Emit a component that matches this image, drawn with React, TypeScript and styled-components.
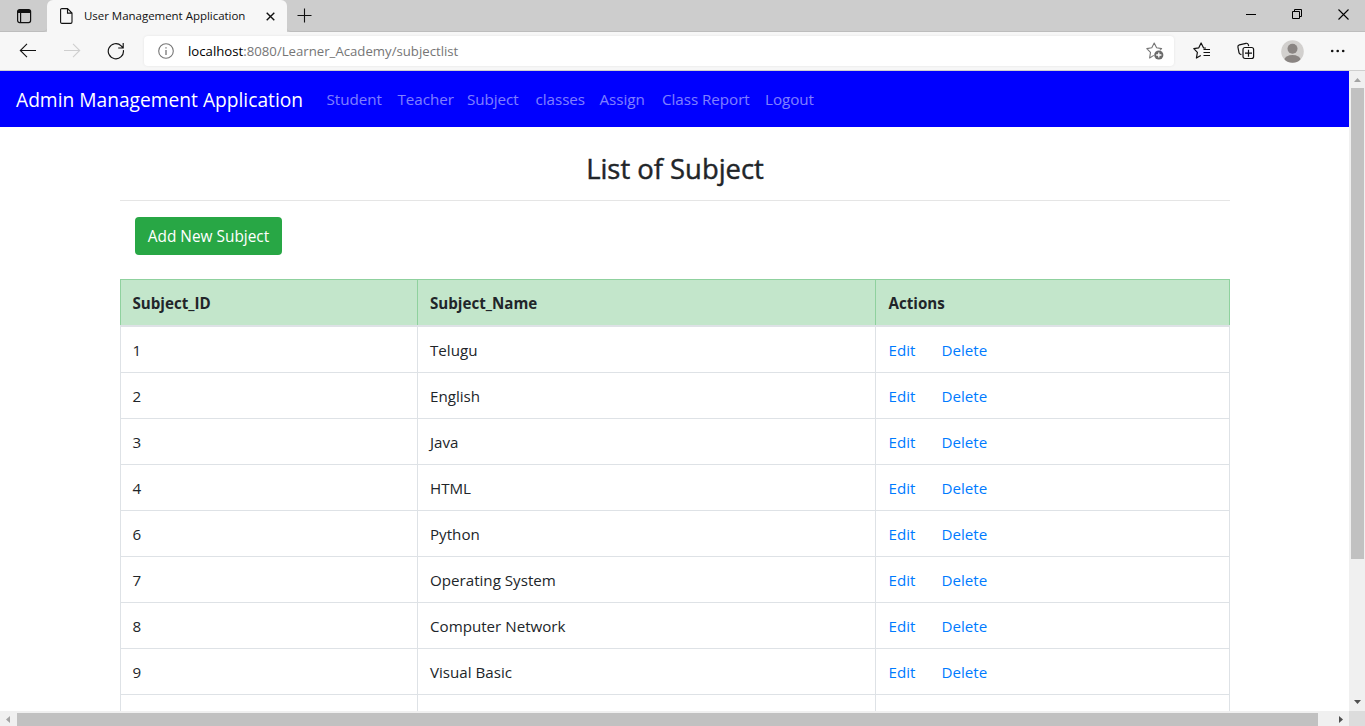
import React from "react";
import styled, { createGlobalStyle } from "styled-components";

const GlobalStyle = createGlobalStyle`
  *, *::before, *::after { box-sizing: border-box; }
  html, body { margin: 0; padding: 0; overflow: hidden; background: #fff; }
  body { font-family: "Open Sans", "Noto Sans", sans-serif; color: #212529; }
  svg { display: block; }
`;

const Browser = styled.div`
  display: flex;
  flex-direction: column;
  width: 1365px;
  height: 726px;
  overflow: hidden;
`;

const TabStrip = styled.div`
  display: flex;
  height: 32px;
  background: #cdcdcd;
  flex: none;
`;

const TabActions = styled.div`
  display: flex;
  align-items: center;
  width: 47px;
  padding-left: 16px;
  border-bottom: 1px solid #bdbdbd;
  border-bottom-right-radius: 4px;
`;

const Tab = styled.div`
  display: flex;
  align-items: center;
  width: 240px;
  padding-left: 13px;
  background: #f7f7f7;
  border-radius: 6px 6px 0 0;
`;

const TabTitle = styled.span`
  width: 182px;
  margin-left: 11px;
  font-size: 11.5px;
  line-height: 16px;
  letter-spacing: -0.03px;
  color: #111;
  white-space: nowrap;
`;

const StripRest = styled.div`
  display: flex;
  flex: 1;
  align-items: center;
  justify-content: space-between;
  padding: 0 16px 0 10px;
  border-bottom: 1px solid #bdbdbd;
  border-bottom-left-radius: 4px;
`;

const WindowButtons = styled.div`
  display: flex;
  align-items: center;
  gap: 35px;
  padding-bottom: 2px;
`;

const Toolbar = styled.div`
  display: flex;
  align-items: center;
  height: 39px;
  flex: none;
  background: #f7f7f7;
  border-bottom: 1px solid #cfcfcf;
`;

const NavButtons = styled.div`
  display: flex;
  align-items: center;
  gap: 26px;
  width: 144px;
  padding-left: 19px;
`;

const AddressBar = styled.div`
  display: flex;
  align-items: center;
  width: 1030px;
  height: 30px;
  padding: 0 10px 0 14px;
  background: #fff;
  border-radius: 4px;
  box-shadow: 0 0 3px rgba(0, 0, 0, 0.08);
`;

const Url = styled.span`
  flex: 1;
  margin-left: 14px;
  font-size: 13.2px;
  line-height: 18px;
  letter-spacing: 0;
  color: #767676;
  white-space: nowrap;
`;

const Host = styled.span`
  color: #000;
`;

const ToolbarActions = styled.div`
  display: flex;
  align-items: center;
  gap: 26px;
  padding-left: 19px;
`;

const Viewport = styled.div`
  display: flex;
  flex: 1;
  min-height: 0;
`;

const Page = styled.main`
  width: 1349px;
  height: 640px;
  overflow: hidden;
  background: #fff;
`;

const Navbar = styled.nav`
  display: flex;
  align-items: center;
  height: 56px;
  padding: 0 16px 0;
  background: #0000ff;
`;

const Brand = styled.a`
  width: 302.5px;
  font-size: 19.2px;
  line-height: 30px;
  padding-top: 2px;
  color: #fff;
  white-space: nowrap;
`;

const NavLink = styled.a<{ $width: number }>`
  width: ${(p) => p.$width}px;
  margin-left: 8px;
  margin-right: 8px;
  font-size: 15.2px;
  line-height: 24px;
  letter-spacing: -0.04px;
  color: rgba(255, 255, 255, 0.5);
  white-space: nowrap;
`;

const NavLinks = styled.div`
  display: flex;
`;

const Container = styled.div`
  width: 1110px;
  margin: 0 0 0 120px;
`;

const Heading = styled.h3`
  height: 74px;
  margin: 0;
  padding-top: 25px;
  border-bottom: 1px solid #e5e5e5;
  font-size: 27.4px;
  line-height: 34px;
  font-weight: 500;
  -webkit-text-stroke: 0.45px #212529;
  text-align: center;
`;

const ButtonRow = styled.div`
  display: flex;
  padding: 16px 15px 24px;
`;

const AddButton = styled.button`
  width: 147px;
  height: 38px;
  padding: 2px 0 0;
  border: 0;
  border-radius: 4px;
  background: #28a745;
  color: #fff;
  font-family: inherit;
  font-size: 15.4px;
  line-height: 24px;
  white-space: nowrap;
`;

const Table = styled.div`
  display: flex;
  flex-direction: column;
  font-size: 15.15px;
  line-height: 24px;
`;

const Row = styled.div`
  display: grid;
  grid-template-columns: 297px 458px 355px;
  height: 46px;
  border-bottom: 1px solid #dee2e6;
`;

const HeadRow = styled(Row)`
  height: 48px;
  border-bottom-width: 2px;
`;

const Cell = styled.div`
  display: flex;
  align-items: center;
  padding: 0 12px;
  border-left: 1px solid #dee2e6;
  &:first-child { padding-left: 11.5px; }
  &:last-child { border-right: 1px solid #dee2e6; padding-left: 12.5px; }
  white-space: nowrap;
`;

const HeadCell = styled(Cell)`
  background: #c3e6cb;
  border-color: #8fd19e;
  border-top: 1px solid #8fd19e;
  font-weight: 700;
  &:last-child { border-color: #8fd19e; }
`;

const ActionLink = styled.a<{ $first?: boolean }>`
  width: ${(p) => (p.$first ? "53px" : "auto")};
  color: #007bff;
`;

const VScroll = styled.div`
  display: flex;
  flex-direction: column;
  align-items: center;
  justify-content: space-between;
  width: 16px;
  height: 640px;
  padding: 7px 0 7px 1px;
  background: #f0f0f0;
`;

const VTrack = styled.div`
  width: 13px;
  height: 612px;
  padding-top: 3px;
`;

const VThumb = styled.div`
  height: 471px;
  background: #c1c1c1;
`;

const HScroll = styled.div`
  display: flex;
  height: 15px;
  flex: none;
  background: #f0f0f0;
`;

const HArrow = styled.div<{ $width: number; $indent: number }>`
  width: ${(p) => p.$width}px;
  padding: 5px 0 0 ${(p) => p.$indent}px;
`;

const HThumb = styled.div`
  width: 1301px;
  height: 13px;
  margin-top: 2px;
  background: #c1c1c1;
`;

const Corner = styled.div`
  width: 16px;
  height: 15px;
  background: #dcdcdc;
`;

const Arrow = ({ points, color, w, h }: { points: string; color: string; w: number; h: number }) => (
  <svg width={w} height={h}>
    <polygon points={points} fill={color} />
  </svg>
);

const TabActionsIcon = () => (
  <svg width="16" height="16" fill="none" stroke="#111" strokeWidth="1.2">
    <rect x="1.6" y="1.6" width="13" height="13" rx="2" />
    <path d="M2 3h12M1.5 4h13" strokeWidth="2.2" />
    <path d="M4.6 4v10" />
  </svg>
);

const FileIcon = () => (
  <svg width="13" height="16" fill="none" stroke="#111" strokeWidth="1.1">
    <path d="M2 .6h5.5L12 5.1v9a1.3 1.3 0 0 1-1.3 1.3H2A1.3 1.3 0 0 1 .6 14.1V2A1.3 1.3 0 0 1 2 .6ZM7.5.8v4.3H12" />
  </svg>
);

const CloseTabIcon = () => (
  <svg width="9" height="9" stroke="#111" strokeWidth="1.4">
    <path d="M.7.7l7.6 7.6M8.3.7.7 8.3" />
  </svg>
);

const PlusIcon = () => (
  <svg width="15" height="15" stroke="#111" strokeWidth="1.1">
    <path d="M7.5.5v14M.5 7.5h14" />
  </svg>
);

const MinimizeIcon = () => (
  <svg width="11" height="11" stroke="#000">
    <path d="M0 5.5h10" />
  </svg>
);

const RestoreIcon = () => (
  <svg width="11" height="11" fill="none" stroke="#000">
    <path d="M.5 2.5h7v7h-7zM2.5 2.5v-2h7v7h-2" />
  </svg>
);

const CloseIcon = () => (
  <svg width="11" height="11" stroke="#000" strokeWidth="1.1">
    <path d="M.5.5l10 10M10.5.5l-10 10" />
  </svg>
);

const BackIcon = () => (
  <svg width="18" height="16" fill="none" stroke="#111" strokeWidth="1.1">
    <path d="M17 7.5H1.5M8 .8 1.3 7.5 8 14.2" />
  </svg>
);

const ForwardIcon = () => (
  <svg width="18" height="16" fill="none" stroke="#cfcfcf" strokeWidth="1.1">
    <path d="M1 7.5h15.5M10 .8l6.7 6.7-6.7 6.7" />
  </svg>
);

const ReloadIcon = () => (
  <svg width="18" height="18" fill="none" stroke="#111" strokeWidth="1.15">
    <path d="M16.4 8.2A7.6 7.6 0 1 1 14.2 3.8L16 5.8M16.2 1v5h-5" />
  </svg>
);

const InfoIcon = () => (
  <svg width="16" height="16" fill="none" stroke="#767676" strokeWidth="1.1">
    <circle cx="8" cy="8" r="7.3" />
    <path d="M8 7v5M8 4.2v1.4" strokeWidth="1.3" />
  </svg>
);

const AddFavoriteIcon = () => (
  <svg width="18" height="18" fill="none" stroke="#767676" strokeWidth="1.1" strokeLinejoin="round">
    <path d="M7.8 13.4 3.6 16l.9-5.7L.8 6.6l5-.8L8.2 1l2.4 4.8 5 .8-1.6 1.6" />
    <circle cx="12.8" cy="13" r="4.6" fill="#6b6b6b" stroke="none" />
    <path d="M12.8 10.4v5.2M10.2 13h5.2" stroke="#fff" strokeWidth="1.3" />
  </svg>
);

const FavoritesIcon = () => (
  <svg width="18" height="18" fill="none" stroke="#111" strokeWidth="1.2" strokeLinejoin="round">
    <path d="M7.8 13.4 3.4 16l1-5.6L.8 6.6l5-.8L8.1 1l2.4 4.8 2.3.4M10.5 7.5H17M10.5 10.5H17M10.5 13.5H17" />
  </svg>
);

const CollectionsIcon = () => (
  <svg width="18" height="18" fill="none" stroke="#111" strokeWidth="1.2" strokeLinejoin="round">
    <path d="M4.4 12.6 3 12a2 2 0 0 1-1-1.4L.9 5A2 2 0 0 1 2.4 2.8L9 1.3a2 2 0 0 1 2.3 1.4l.4 1.5" />
    <rect x="6" y="5.5" width="10.6" height="11" rx="2" />
    <path d="M11.5 7.7v7M8 11.2h7" />
  </svg>
);

const ProfileIcon = () => (
  <svg width="23" height="23">
    <defs>
      <clipPath id="avatar">
        <circle cx="11.5" cy="11.5" r="11.3" />
      </clipPath>
    </defs>
    <g clipPath="url(#avatar)">
      <rect width="23" height="23" fill="#d2d0ce" />
      <circle cx="11.5" cy="8.7" r="5" fill="#8a8583" />
      <ellipse cx="11.5" cy="20" rx="8.2" ry="5" fill="#8a8583" />
    </g>
  </svg>
);

const MoreIcon = () => (
  <svg width="16" height="4" fill="#111">
    <circle cx="2.2" cy="2" r="1.3" />
    <circle cx="7.7" cy="2" r="1.3" />
    <circle cx="13.2" cy="2" r="1.3" />
  </svg>
);

const links: [string, number][] = [
  ["Student", 55],
  ["Teacher", 53.5],
  ["Subject", 52.5],
  ["classes", 48],
  ["Assign", 46.5],
  ["Class Report", 87],
  ["Logout", 50],
];

const subjects: [number, string][] = [
  [1, "Telugu"],
  [2, "English"],
  [3, "Java"],
  [4, "HTML"],
  [6, "Python"],
  [7, "Operating System"],
  [8, "Computer Network"],
  [9, "Visual Basic"],
];

export default function App() {
  return (
    <Browser>
      <GlobalStyle />
      <TabStrip>
        <TabActions><TabActionsIcon /></TabActions>
        <Tab>
          <FileIcon />
          <TabTitle>User Management Application</TabTitle>
          <CloseTabIcon />
        </Tab>
        <StripRest>
          <PlusIcon />
          <WindowButtons>
            <MinimizeIcon />
            <RestoreIcon />
            <CloseIcon />
          </WindowButtons>
        </StripRest>
      </TabStrip>
      <Toolbar>
        <NavButtons>
          <BackIcon />
          <ForwardIcon />
          <ReloadIcon />
        </NavButtons>
        <AddressBar>
          <InfoIcon />
          <Url><Host>localhost</Host>:8080/Learner_Academy/subjectlist</Url>
          <AddFavoriteIcon />
        </AddressBar>
        <ToolbarActions>
          <FavoritesIcon />
          <CollectionsIcon />
          <ProfileIcon />
          <MoreIcon />
        </ToolbarActions>
      </Toolbar>
      <Viewport>
        <Page>
          <Navbar>
            <Brand>Admin Management Application</Brand>
            <NavLinks>
              {links.map(([label, width]) => (
                <NavLink key={label} $width={width}>{label}</NavLink>
              ))}
            </NavLinks>
          </Navbar>
          <Container>
            <Heading>List of Subject</Heading>
            <ButtonRow><AddButton>Add New Subject</AddButton></ButtonRow>
            <Table>
              <HeadRow>
                <HeadCell>Subject_ID</HeadCell>
                <HeadCell>Subject_Name</HeadCell>
                <HeadCell>Actions</HeadCell>
              </HeadRow>
              {subjects.map(([id, name]) => (
                <Row key={id}>
                  <Cell>{id}</Cell>
                  <Cell>{name}</Cell>
                  <Cell>
                    <ActionLink $first>Edit</ActionLink>
                    <ActionLink>Delete</ActionLink>
                  </Cell>
                </Row>
              ))}
              <Row><Cell /><Cell /><Cell /></Row>
            </Table>
          </Container>
        </Page>
        <VScroll>
          <Arrow points="0,4 3.5,0 7,4" color="#a3a3a3" w={7} h={4} />
          <VTrack><VThumb /></VTrack>
          <Arrow points="0,0 7,0 3.5,4" color="#505050" w={7} h={4} />
        </VScroll>
      </Viewport>
      <HScroll>
        <HArrow $width={17} $indent={6}>
          <Arrow points="4,0 0,3.5 4,7" color="#a3a3a3" w={4} h={7} />
        </HArrow>
        <HThumb />
        <HArrow $width={31} $indent={21}>
          <Arrow points="0,0 4,3.5 0,7" color="#505050" w={4} h={7} />
        </HArrow>
        <Corner />
      </HScroll>
    </Browser>
  );
}
